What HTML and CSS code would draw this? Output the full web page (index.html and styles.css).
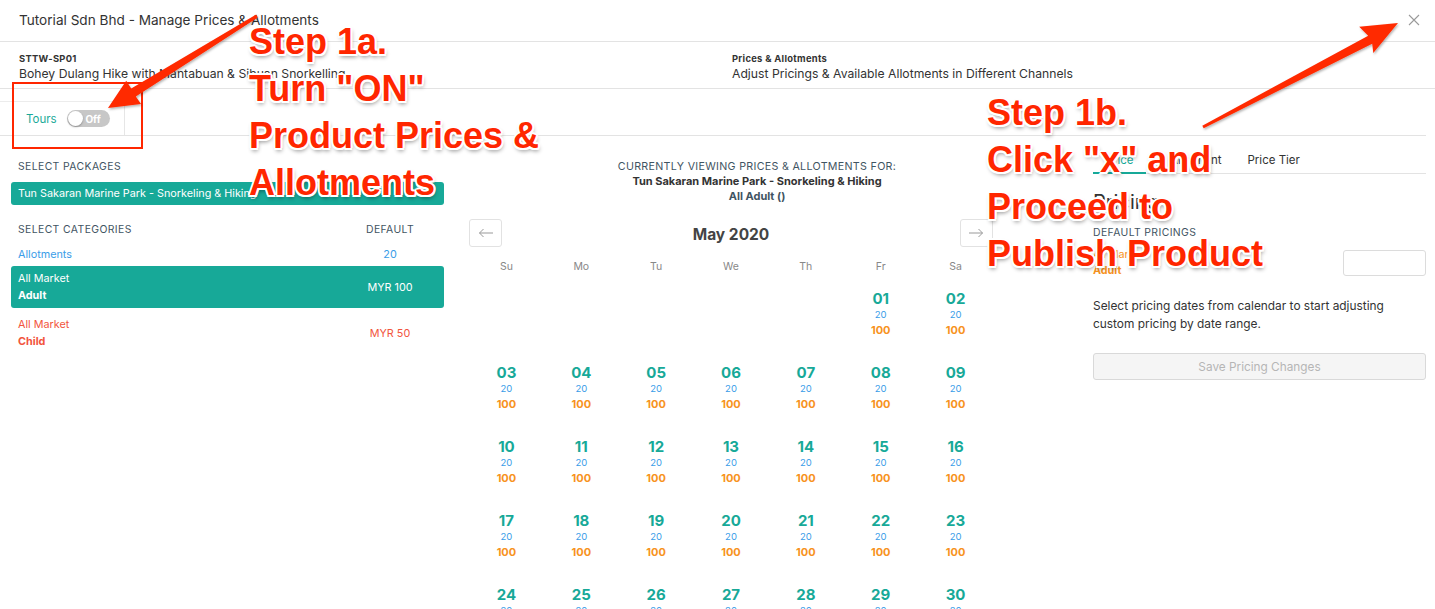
FILE: index.html
```html
<!DOCTYPE html>
<html lang="en">
<head>
<meta charset="utf-8">
<title>Manage Prices &amp; Allotments</title>
<link rel="stylesheet" href="styles.css">
</head>
<body>
<div class="page">
  <header class="topbar">
    <div class="title">Tutorial Sdn Bhd - Manage Prices &amp; Allotments</div>
    <button class="close" aria-label="Close">
      <svg width="12" height="12" viewBox="0 0 12 12"><path d="M1 1 L11 11 M11 1 L1 11" stroke="#9a9a9a" stroke-width="1.1" fill="none"/></svg>
    </button>
  </header>

  <section class="subheader">
    <div class="sub-left">
      <div class="code">STTW-SP01</div>
      <div class="name">Bohey Dulang Hike with Mantabuan &amp; Sibuan Snorkelling</div>
    </div>
    <div class="sub-right">
      <div class="code">Prices &amp; Allotments</div>
      <div class="name">Adjust Pricings &amp; Available Allotments in Different Channels</div>
    </div>
  </section>

  <nav class="tabbar">
    <div class="tour-tab">
      <span class="tour-label">Tours</span>
      <span class="toggle"><span class="knob"></span><span class="toggle-text">Off</span></span>
    </div>
  </nav>

  <main class="main">
    <section class="left">
      <div class="sec-head">Select Packages</div>
      <div class="pill">Tun Sakaran Marine Park - Snorkeling &amp; Hiking</div>
      <div class="cat-head"><span>Select Categories</span><span class="col-def">Default</span></div>
      <div class="cat-row allot"><span>Allotments</span><span class="col-def">20</span></div>
      <div class="cat-row active"><span class="two"><span>All Market</span><b>Adult</b></span><span class="col-def">MYR 100</span></div>
      <div class="cat-row child"><span class="two"><span>All Market</span><b>Child</b></span><span class="col-def">MYR 50</span></div>
    </section>

    <section class="middle">
      <div class="viewing">
        <div class="v1">Currently viewing prices &amp; allotments for:</div>
        <div class="v2">Tun Sakaran Marine Park - Snorkeling &amp; Hiking</div>
        <div class="v3">All Adult ()</div>
      </div>
      <div class="cal-nav">
        <button class="nav-btn"><svg width="16" height="10" viewBox="0 0 16 10"><path d="M15 5 H1.5 M5.5 1 L1.5 5 L5.5 9" stroke="#999" stroke-width="1" fill="none"/></svg></button>
        <div class="month">May 2020</div>
        <button class="nav-btn"><svg width="16" height="10" viewBox="0 0 16 10"><path d="M1 5 H14.5 M10.5 1 L14.5 5 L10.5 9" stroke="#999" stroke-width="1" fill="none"/></svg></button>
      </div>
      <div class="cal">
        <div class="wd">Su</div><div class="wd">Mo</div><div class="wd">Tu</div><div class="wd">We</div><div class="wd">Th</div><div class="wd">Fr</div><div class="wd">Sa</div>
        <div class="day empty"></div><div class="day empty"></div><div class="day empty"></div><div class="day empty"></div><div class="day empty"></div>
        <div class="day"><b>01</b><i>20</i><em>100</em></div>
        <div class="day"><b>02</b><i>20</i><em>100</em></div>
        <div class="day"><b>03</b><i>20</i><em>100</em></div>
        <div class="day"><b>04</b><i>20</i><em>100</em></div>
        <div class="day"><b>05</b><i>20</i><em>100</em></div>
        <div class="day"><b>06</b><i>20</i><em>100</em></div>
        <div class="day"><b>07</b><i>20</i><em>100</em></div>
        <div class="day"><b>08</b><i>20</i><em>100</em></div>
        <div class="day"><b>09</b><i>20</i><em>100</em></div>
        <div class="day"><b>10</b><i>20</i><em>100</em></div>
        <div class="day"><b>11</b><i>20</i><em>100</em></div>
        <div class="day"><b>12</b><i>20</i><em>100</em></div>
        <div class="day"><b>13</b><i>20</i><em>100</em></div>
        <div class="day"><b>14</b><i>20</i><em>100</em></div>
        <div class="day"><b>15</b><i>20</i><em>100</em></div>
        <div class="day"><b>16</b><i>20</i><em>100</em></div>
        <div class="day"><b>17</b><i>20</i><em>100</em></div>
        <div class="day"><b>18</b><i>20</i><em>100</em></div>
        <div class="day"><b>19</b><i>20</i><em>100</em></div>
        <div class="day"><b>20</b><i>20</i><em>100</em></div>
        <div class="day"><b>21</b><i>20</i><em>100</em></div>
        <div class="day"><b>22</b><i>20</i><em>100</em></div>
        <div class="day"><b>23</b><i>20</i><em>100</em></div>
        <div class="day"><b>24</b><i>20</i><em>100</em></div>
        <div class="day"><b>25</b><i>20</i><em>100</em></div>
        <div class="day"><b>26</b><i>20</i><em>100</em></div>
        <div class="day"><b>27</b><i>20</i><em>100</em></div>
        <div class="day"><b>28</b><i>20</i><em>100</em></div>
        <div class="day"><b>29</b><i>20</i><em>100</em></div>
        <div class="day"><b>30</b><i>20</i><em>100</em></div>
        <div class="day"><b>31</b><i>20</i><em>100</em></div>
      </div>
    </section>

    <section class="right">
      <div class="tabs">
        <span class="tab active">Price</span>
        <span class="tab">Allotment</span>
        <span class="tab">Price Tier</span>
      </div>
      <h2 class="pricing-title">Pricing</h2>
      <div class="sec-head">Default Pricings</div>
      <div class="def-row">
        <span class="two orange"><span>All Market</span><b>Adult</b></span>
        <input class="price-input" type="text">
      </div>
      <p class="hint">Select pricing dates from calendar to start adjusting custom pricing by date range.</p>
      <button class="save" disabled>Save Pricing Changes</button>
    </section>
  </main>
</div>

<svg class="overlay" width="1435" height="609" viewBox="0 0 1435 609">
  <defs>
    <filter id="sh" x="-10%" y="-10%" width="130%" height="130%">
      <feDropShadow dx="1" dy="1.5" stdDeviation="1.2" flood-color="#000" flood-opacity="0.3"/>
    </filter>
  </defs>
  <rect x="13" y="83" width="129" height="65" fill="none" stroke="#ff2600" stroke-width="2"/>
  <polygon filter="url(#sh)" fill="#ff2a00" points="257.8,17.6 135.8,96.4 141.0,104.0 108,108 126.2,80.8 131.2,88.6 256.2,14.4"/>
  <polygon filter="url(#sh)" fill="#ff2a00" points="1202.3,125.7 1368.2,35.8 1359.2,26.7 1398,23 1373.3,53.1 1372.2,43.8 1203.7,128.3"/>
</svg>

<div class="note note-a">Step 1a.<br>Turn "ON"<br>Product Prices &amp;<br>Allotments</div>
<div class="note note-b">Step 1b.<br>Click "x" and<br>Proceed to<br>Publish Product</div>
</body>
</html>
```

FILE: styles.css
```css
* { box-sizing: border-box; }
html, body { margin: 0; padding: 0; }
body {
  width: 1435px;
  height: 609px;
  overflow: hidden;
  background: #fff;
  font-family: "Inter", "Liberation Sans", Arial, sans-serif;
  color: #333;
  position: relative;
}
.page { width: 1435px; }

.topbar {
  height: 42px;
  border-bottom: 1px solid #e3e3e3;
  display: flex;
  align-items: center;
  justify-content: space-between;
  padding: 0 14px 2px 19px;
}
.title { font-size: 13.6px; color: #333; }
.close {
  border: 0; background: none; padding: 0; width: 14px; height: 14px;
  display: flex; align-items: center; justify-content: center;
}

.subheader {
  height: 47px;
  border-bottom: 1px solid #e3e3e3;
  display: flex;
  padding-top: 11px;
}
.sub-left { width: 732px; padding-left: 19px; }
.code { font-size: 9.4px; font-weight: 700; color: #333; letter-spacing: 0.3px; line-height: 12px; }
.name { font-size: 12.2px; color: #333; line-height: 18px; }

.tabbar {
  height: 47px;
  margin-right: 9px;
  border-bottom: 1px solid #e3e3e3;
  padding-top: 12px;
}
.tour-tab {
  width: 125px;
  height: 34px;
  border-top: 1px solid #ececec;
  border-right: 1px solid #e6e6e6;
  display: flex;
  align-items: center;
  padding-left: 26px;
  gap: 10px;
}
.tour-label { color: #1aa998; font-size: 11.5px; }
.toggle {
  position: relative;
  width: 43px; height: 17px;
  background: #c7c7c7;
  border-radius: 9px;
  display: flex; align-items: center; justify-content: flex-end;
  padding-right: 9px;
}
.knob {
  position: absolute; left: 1px; top: 1px;
  width: 15px; height: 15px; border-radius: 50%;
  background: #fff; box-shadow: 0 1px 2px rgba(0,0,0,.3);
}
.toggle-text { color: #fff; font-size: 10px; font-weight: 700; }

.main { display: flex; padding-top: 23px; }

.left { width: 433px; margin-left: 11px; }
.sec-head {
  font-size: 10.4px; text-transform: uppercase; color: #3f5462; letter-spacing: 0.4px;
  line-height: 14px;
}
.left .sec-head { padding-left: 7px; padding-top: 1px; }
.pill {
  margin-top: 8px;
  height: 23px;
  background: #17a998;
  border-radius: 3px;
  color: #fff;
  font-size: 10.8px;
  display: flex; align-items: center;
  padding-left: 7px;
}
.cat-head {
  margin-top: 18px;
  display: flex; justify-content: space-between;
  font-size: 10.4px; text-transform: uppercase; color: #3f5462; letter-spacing: 0.4px;
  line-height: 14px;
  padding-left: 7px;
}
.col-def { width: 108px; text-align: center; }
.cat-row {
  display: flex; justify-content: space-between; align-items: center;
  padding-left: 7px;
  font-size: 10.8px;
}
.cat-row.allot { color: #3a9de8; height: 24px; margin-top: 5px; }
.two { display: flex; flex-direction: column; line-height: 17px; }
.two b { font-weight: 700; }
.cat-row.active {
  background: #17a998; color: #fff; border-radius: 3px;
  height: 42px; margin-top: 0;
}
.cat-row.child { color: #f2543d; height: 42px; margin-top: 4px; }

.middle { width: 524px; margin-left: 25px; }
.viewing { text-align: center; line-height: 15px; font-size: 10.7px; margin-left: 52px; }
.v1 { text-transform: uppercase; color: #3f5462; letter-spacing: 0.3px; }
.v2 { font-weight: 700; color: #333; font-size: 11px; }
.v3 { font-weight: 700; color: #3f5462; font-size: 11px; }
.cal-nav {
  margin-top: 15px;
  display: flex; justify-content: space-between; align-items: center;
  height: 28px;
}
.nav-btn {
  width: 33px; height: 28px; border: 1px solid #e2e2e2; border-radius: 3px;
  background: #fff; padding: 0; display: flex; align-items: center; justify-content: center;
}
.month { font-size: 15.5px; font-weight: 700; color: #444; margin-top: 2px; }
.cal {
  margin-top: 10px;
  display: grid;
  grid-template-columns: repeat(7, 1fr);
  grid-template-rows: 32px;
  grid-auto-rows: 74px;
}
.cal .wd { text-align: center; font-size: 10.5px; color: #888; line-height: 20px; height: 32px; }
.day { display: flex; flex-direction: column; align-items: center; }
.day b { font-size: 15px; font-weight: 700; color: #17a998; line-height: 20px; }
.day i { font-style: normal; font-size: 9.5px; color: #3a9de8; line-height: 12px; }
.day em { font-style: normal; font-size: 11px; font-weight: 700; color: #f7931e; line-height: 19px; }

.right { width: 333px; margin-left: 100px; }
.tabs {
  display: flex;
  border-bottom: 1px solid #e3e3e3;
  height: 20px;
  margin-top: -5px;
}
.tab { font-size: 11.5px; color: #333; line-height: 13px; height: 20px; margin-right: 26px; }
.tab.active { color: #17a998; border-bottom: 2px solid #17a998; width: 53px; text-align: center; margin-right: 24px; }
.pricing-title { font-size: 20px; font-weight: 400; color: #333; margin: 17px 0 0; line-height: 22px; }
.right .sec-head { margin-top: 13px; }
.def-row { display: flex; justify-content: space-between; align-items: center; margin-top: 7px; }
.orange { color: #f7931e; font-size: 10.8px; line-height: 16px; }
.price-input { width: 83px; height: 26px; border: 1px solid #dcdcdc; border-radius: 3px; }
.hint { font-size: 11.9px; line-height: 18px; color: #333; margin: 18px 0 0; width: 310px; }
.save {
  margin-top: 20px;
  width: 333px; height: 27px;
  background: #f5f5f5; border: 1px solid #d9d9d9; border-radius: 3px;
  color: #b5b5b5; font-size: 11.8px; font-family: inherit;
}

.overlay { position: absolute; left: 0; top: 0; pointer-events: none; }
.note {
  position: absolute;
  font-family: "Liberation Sans", Arial, sans-serif;
  font-weight: 700;
  font-size: 36px;
  line-height: 47px;
  color: #ff2600;
  white-space: nowrap;
  text-shadow: 2px 0 #fff, -2px 0 #fff, 0 2px #fff, 0 -2px #fff,
    1.5px 1.5px #fff, -1.5px 1.5px #fff, 1.5px -1.5px #fff, -1.5px -1.5px #fff,
    1px 3px 4px rgba(0,0,0,.45);
}
.note-a { left: 249px; top: 18px; }
.note-b { left: 987px; top: 89px; }
```
